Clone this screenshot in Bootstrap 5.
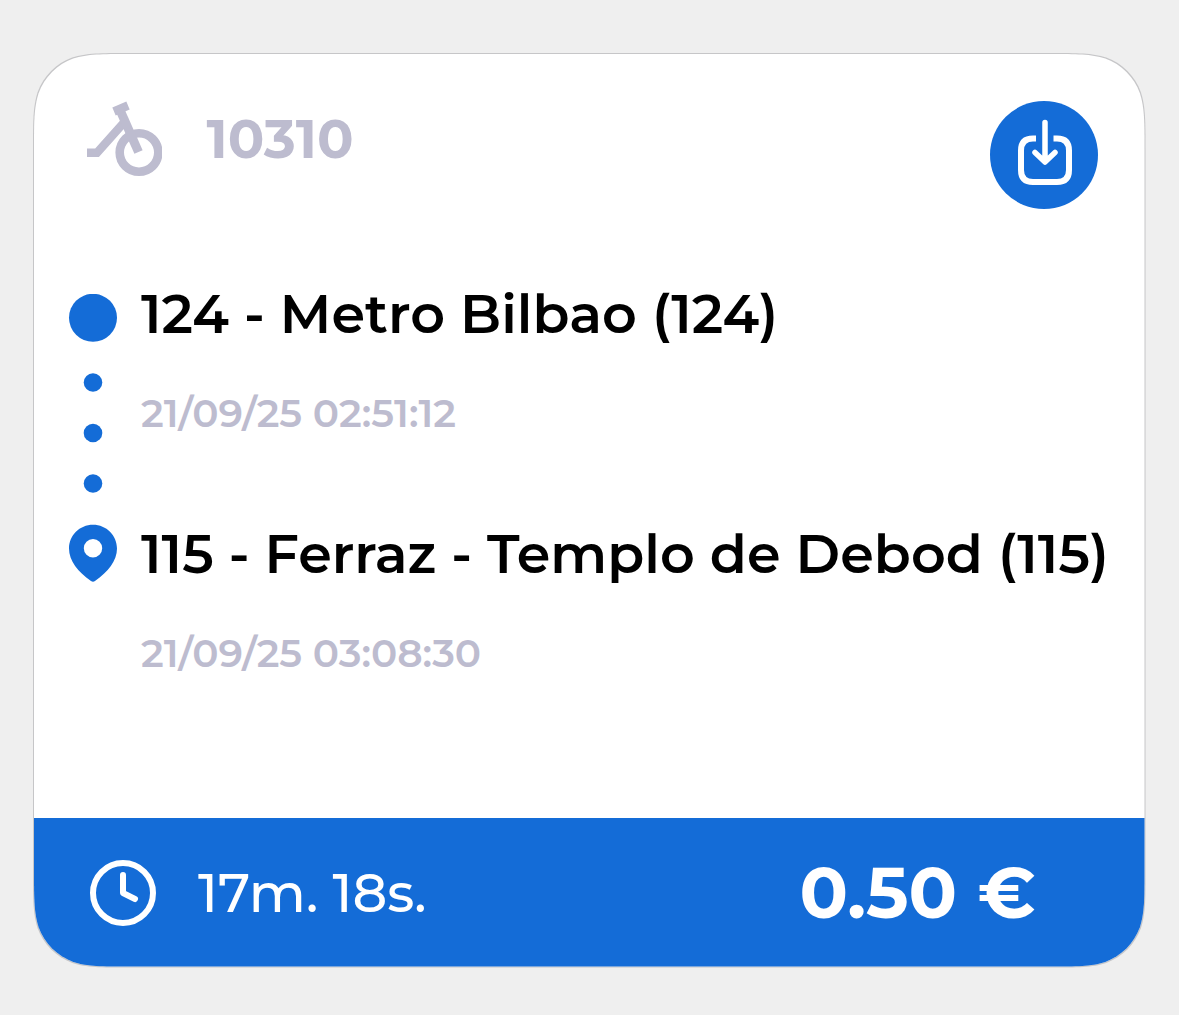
<!DOCTYPE html>
<html lang="es">
<head>
<meta charset="utf-8">
<meta name="viewport" content="width=device-width, initial-scale=1">
<title>Viaje 10310</title>
<link href="https://cdn.jsdelivr.net/npm/bootstrap@5.3.0/dist/css/bootstrap.min.css" rel="stylesheet">
<style>
body{background:#efefef;font-family:Montserrat,Inter,"Open Sans",sans-serif;overflow:hidden}
.trip-frame{width:1112.5px;height:914.500px;margin:53px 0 0 33px;padding:1px;background:#c6c6c8;
clip-path:path("M94.7 0H1017.8C1045 0 1058.600 0 1073.300 4.600C1089.300 10.400 1102.100 23.200 1107.900 39.200C1112.500 53.900 1112.500 67.500 1112.500 94.700V819.800C1112.500 847 1112.500 860.600 1107.900 875.300C1102.100 891.300 1089.300 904.100 1073.300 909.900C1058.600 914.500 1045 914.500 1017.800 914.500H94.700C67.500 914.500 53.900 914.500 39.200 909.900C23.200 904.100 10.400 891.300 4.600 875.300C0 860.600 0 847 0 819.800V94.700C0 67.500 0 53.900 4.600 39.200C10.400 23.200 23.200 10.400 39.200 4.600C53.900 0 67.500 0 94.700 0Z")}
.trip{height:912.500px;background:#fff;
clip-path:path("M94.7 0H1015.8C1043 0 1056.600 0 1071.300 4.600C1087.300 10.400 1100.100 23.200 1105.900 39.200C1110.500 53.900 1110.500 67.500 1110.500 94.700V817.800C1110.500 845 1110.500 858.600 1105.900 873.300C1100.100 889.300 1087.300 902.100 1071.300 907.900C1056.600 912.500 1043 912.500 1015.800 912.500H94.700C67.500 912.500 53.900 912.500 39.200 907.900C23.200 902.100 10.400 889.300 4.600 873.300C0 858.600 0 845 0 817.800V94.700C0 67.500 0 53.900 4.600 39.200C10.400 23.200 23.200 10.400 39.200 4.600C53.900 0 67.500 0 94.700 0Z")}
.trip-head{height:240px;padding:47px 46.500px 0 53px}
.trip svg{display:block;flex:none}
.bike-no{font-size:54px;line-height:60px;font-weight:700;color:#bdbccf;margin:8px 0 0 44.500px}
.save-btn{width:108px;height:108px;background:#146cd7;border-radius:50%}
.route{height:524px;padding-left:34px}
.route-line{width:50px;margin-right:23px}
.stop-name{font-size:54px;line-height:60px;font-weight:600;color:#000;white-space:nowrap;letter-spacing:.05px}
.stop-time{font-size:39px;line-height:50px;font-weight:600;color:#bdbccf;white-space:nowrap;margin-top:44px}
.stops{margin-top:-10px}
.stop{height:240px}
.trip-foot{height:148.500px;background:#146cd7;color:#fff;padding:2px 109px 0 55px}
.elapsed{font-size:54px;line-height:60px;font-weight:500;margin-left:41px;letter-spacing:-.05px}
.price{font-size:71.600px;line-height:80px;font-weight:700}
</style>
<script src="https://cdn.jsdelivr.net/npm/bootstrap@5.3.0/dist/js/bootstrap.bundle.min.js"></script>
</head>
<body>
<main class="trip-frame">
<article class="trip d-flex flex-column">
<header class="trip-head d-flex justify-content-between align-items-start">
<div class="d-flex align-items-start">
<svg width="75" height="76" viewBox="0 0 75 76" fill="none" stroke="#bdbccf"><path stroke-width="8.500" d="M0 51.800H10L37 21.500"/><circle cx="52" cy="51.500" r="19.300" stroke-width="8.600"/><path stroke-width="9" d="M33 9L51.500 51"/><path stroke-width="8.500" d="M27 10.500L41 4.500"/></svg>
<div class="bike-no">10310</div>
</div>
<button class="save-btn btn p-0 border-0" aria-label="Guardar">
<svg width="108" height="108" viewBox="0 0 108 108" fill="none" stroke="#fff" stroke-width="6"><path d="M46 37.500H43Q31 37.500 31 49.500V69Q31 81 43 81H67Q79 81 79 69V49.500Q79 37.500 67 37.500H63.500"/><path stroke-linecap="round" stroke-linejoin="round" stroke-width="5.500" d="M55 21.500V60.500M45 51.500L55 61L65 51.500"/></svg>
</button>
</header>
<section class="route d-flex">
<div class="route-line">
<svg width="50" height="290" viewBox="0 0 50 290" fill="#146cd7"><circle cx="25" cy="23.800" r="24"/><circle cx="25" cy="88.500" r="9.300"/><circle cx="25" cy="139" r="9.300"/><circle cx="25" cy="189.500" r="9.300"/><path fill-rule="evenodd" d="M25 230.800C11.500 230.800 1 241.500 1 254.500C1 266.500 10 278 23 287Q25 288.500 27 287C40 278 49 266.500 49 254.500C49 241.500 38.500 230.800 25 230.800ZM25 245A9.200 9.200 0 1 1 25 263.400A9.200 9.200 0 1 1 25 245Z"/></svg>
</div>
<div class="stops">
<div class="stop"><div class="stop-name">124 - Metro Bilbao (124)</div><div class="stop-time">21/09/25 02:51:12</div></div>
<div class="stop"><div class="stop-name">115 - Ferraz - Templo de Debod (115)</div><div class="stop-time">21/09/25 03:08:30</div></div>
</div>
</section>
<footer class="trip-foot d-flex align-items-center justify-content-between">
<div class="d-flex align-items-center">
<svg width="68" height="68" viewBox="0 0 68 68" fill="none" stroke="#fff" stroke-width="6" stroke-linecap="round" stroke-linejoin="round"><circle cx="34" cy="34" r="30"/><path d="M34 16V34L46 40"/></svg>
<span class="elapsed">17m. 18s.</span>
</div>
<span class="price">0.50 €</span>
</footer>
</article>
</main>
</body>
</html>
